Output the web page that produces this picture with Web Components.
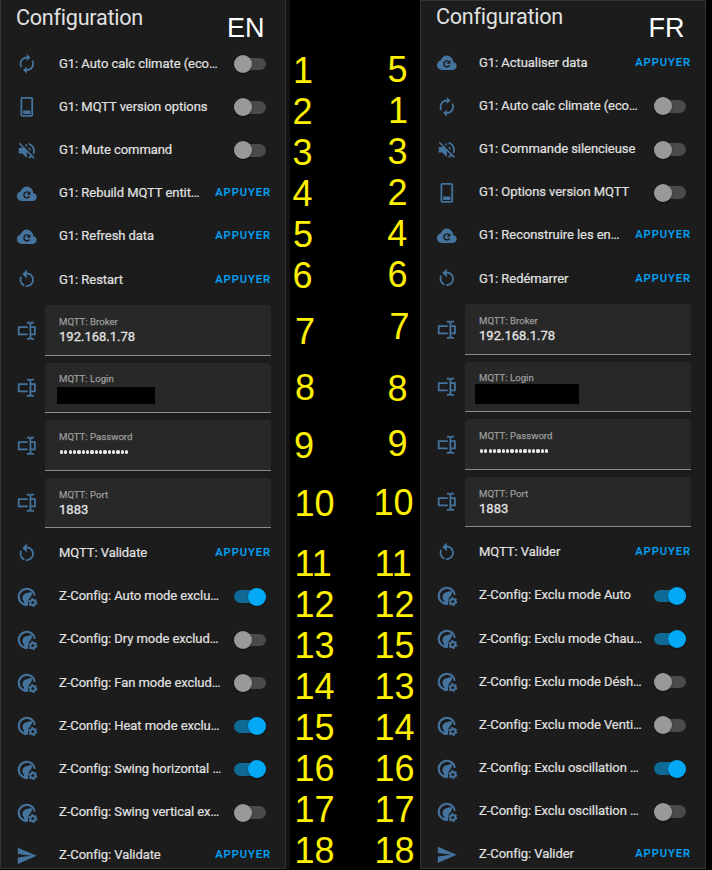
<!DOCTYPE html>
<html lang="en">
<head>
<meta charset="utf-8">
<title>Configuration</title>
<style>
html,body{margin:0;background:#000;}
body{width:712px;height:870px;overflow:hidden;font-family:Roboto,"Noto Sans",sans-serif;}
</style>
</head>
<body>
<compare-board></compare-board>
<script>
const ICONS = {
  renew:'<path d="M12,6V9L16,5L12,1V4A8,8 0 0,0 4,12C4,13.57 4.46,15.03 5.24,16.26L6.7,14.8C6.25,13.97 6,13 6,12A6,6 0 0,1 12,6M18.76,7.74L17.3,9.2C17.74,10.04 18,11 18,12A6,6 0 0,1 12,18V15L8,19L12,23V20A8,8 0 0,0 20,12C20,10.43 19.54,8.97 18.76,7.74Z"/>',
  phone:'<path fill-rule="evenodd" d="M7,1H17A2,2 0 0,1 19,3V21A2,2 0 0,1 17,23H7A2,2 0 0,1 5,21V3A2,2 0 0,1 7,1M7,3V21H17V3ZM8,16H16V20H8Z"/>',
  mute:'<path d="M12,4L9.91,6.09L12,8.18M4.27,3L3,4.27L7.73,9H3V15H7L12,20V13.27L16.25,17.53C15.58,18.04 14.83,18.46 14,18.7V20.77C15.38,20.45 16.63,19.82 17.68,18.96L19.73,21L21,19.73L12,10.73M19,12C19,12.94 18.8,13.82 18.46,14.64L19.97,16.15C20.62,14.91 21,13.5 21,12C21,7.72 18,4.14 14,3.23V5.29C16.89,6.15 19,8.83 19,12M16.5,12C16.5,10.23 15.5,8.71 14,7.97V10.18L16.45,12.63C16.5,12.43 16.5,12.21 16.5,12Z"/>',
  cloud:'<path d="M6.5 20Q4.22 20 2.61 18.43 1 16.85 1 14.58 1 12.63 2.17 11.1 3.35 9.57 5.25 9.15 5.88 6.85 7.75 5.43 9.63 4 12 4 14.93 4 16.96 6.04 19 8.07 19 11 20.73 11.2 21.86 12.5 23 13.78 23 15.5 23 17.38 21.69 18.69 20.38 20 18.5 20Z"/><path d="M15 14.8A3.3 3.3 0 1 1 14.4 10.8" fill="none" stroke="#1c1c1c" stroke-width="1.6"/><path fill="#1c1c1c" d="M16 8.8V13H11.8Z"/>',
  restart:'<path d="M12,4C14.1,4 16.1,4.8 17.6,6.3C20.7,9.4 20.7,14.5 17.6,17.6C15.8,19.5 13.3,20.2 10.9,19.9L11.4,17.9C13.1,18.1 14.9,17.5 16.2,16.2C18.5,13.9 18.5,10.1 16.2,7.7C15.1,6.6 13.5,6 12,6V10.6L7,5.6L12,0.6V4M6.3,17.6C3.7,15 3.3,11 5.1,7.9L6.6,9.4C5.5,11.6 5.9,14.4 7.8,16.2C8.3,16.7 8.9,17.1 9.6,17.4L9,19.4C8,19 7.1,18.4 6.3,17.6Z"/>',
  field:'<path d="M17,7H22V17H17V19A1,1 0 0,0 18,20H20V22H17.5C16.95,22 16,21.55 16,21C16,21.55 15.05,22 14.5,22H12V20H14A1,1 0 0,0 15,19V5A1,1 0 0,0 14,4H12V2H14.5C15.05,2 16,2.45 16,3C16,2.45 16.95,2 17.5,2H20V4H18A1,1 0 0,0 17,5V7M2,7H13V9H4V15H13V17H2V7M20,15V9H17V15H20Z"/>',
  gauge:'<path d="M20.8 11A8.9 8.9 0 1 0 12 20.9" fill="none" stroke="currentColor" stroke-width="2.4"/><path d="M12 8L17 6.3L18 8.8L16 12.6C14.4 14 13.6 15.6 13.4 18V22H9V17C7.4 15.8 6.9 13.8 7.4 11.9C8 9.6 9.8 8.2 12 8Z"/><circle cx="18.7" cy="18.4" r="2.8" fill="none" stroke="currentColor" stroke-width="2.2"/><circle cx="18.7" cy="18.4" r="4.3" fill="none" stroke="currentColor" stroke-width="1.5" stroke-dasharray="2.25 2.25"/>',
  send:'<path d="M2,21L23,12L2,3V10L17,12L2,14V21Z"/>'
};

class BoardIcon extends HTMLElement{
  connectedCallback(){
    this.attachShadow({mode:'open'}).innerHTML=`<style>:host{display:block;flex:none;width:21.6px;height:21.6px;color:#44739e}svg{display:block;width:100%;height:100%;fill:currentColor}</style><svg viewBox="0 0 24 24">${ICONS[this.getAttribute('name')]}</svg>`;
  }
}
customElements.define('board-icon',BoardIcon);

class ToggleSwitch extends HTMLElement{
  connectedCallback(){
    this.attachShadow({mode:'open'}).innerHTML=`<style>
:host{display:flex;align-items:center;flex:none;box-sizing:border-box;width:32.4px;height:12.6px;border-radius:7px;background:#4a4a4a;margin-right:4.6px}
i{display:block;width:18px;height:18px;flex:none;border-radius:50%;background:#999;box-shadow:0 1px 2px #0006}
:host([on]){background:#0f6a95;justify-content:flex-end}
:host([on]) i{background:#03a9f4;margin-right:.3px}
</style><i></i>`;
  }
}
customElements.define('toggle-switch',ToggleSwitch);

class EntityRow extends HTMLElement{
  connectedCallback(){
    this.attachShadow({mode:'open'}).innerHTML=`<style>
:host{display:flex;align-items:center;height:36px;padding-left:7.2px;white-space:nowrap}
.label{flex:1;margin-left:21.1px;padding-bottom:1px;font-size:13px;line-height:18px;color:#e1e1e1;letter-spacing:-.06px;-webkit-text-stroke:.2px #e1e1e1}
</style><board-icon name="${this.getAttribute('icon')}"></board-icon><span class="label"><slot></slot></span><slot name="control"></slot>`;
  }
}
customElements.define('entity-row',EntityRow);

class PressButton extends HTMLElement{
  connectedCallback(){
    this.attachShadow({mode:'open'}).innerHTML=`<style>:host{display:block;font-size:11.2px;font-weight:500;letter-spacing:.95px;color:#03a0f0;-webkit-text-stroke:.15px #03a0f0;line-height:18px;padding-bottom:1px;margin-right:-.1px}</style><slot></slot>`;
  }
}
customElements.define('press-button',PressButton);

class FieldRow extends HTMLElement{
  connectedCallback(){
    this.attachShadow({mode:'open'}).innerHTML=`<style>
:host{display:flex;align-items:center;height:50.4px;padding-left:7.2px}
.box{flex:1;margin-left:7.2px;box-sizing:border-box;height:50.4px;background:#282828;border-radius:4px 4px 0 0;border-bottom:1px solid #8c8c8c;padding:9.6px 13.9px 0}
.cap{font-size:9.6px;line-height:13px;color:#9b9b9b;-webkit-text-stroke:.25px #9b9b9b}
.val{font-size:13px;line-height:18px;color:#e1e1e1;-webkit-text-stroke:.3px #e1e1e1}
</style><board-icon name="field"></board-icon><div class="box"><div class="cap">${this.getAttribute('caption')}</div><div class="val"><slot></slot></div></div>`;
  }
}
customElements.define('field-row',FieldRow);

class MaskBar extends HTMLElement{
  connectedCallback(){
    this.attachShadow({mode:'open'}).innerHTML='<style>:host{display:block;background:#000;width:var(--w);height:var(--h);margin:var(--m)}</style>';
  }
}
customElements.define('mask-bar',MaskBar);

class PasswordDots extends HTMLElement{
  connectedCallback(){
    this.attachShadow({mode:'open'}).innerHTML=`<style>:host{display:flex;align-items:center;height:18px;gap:1.17px;padding-left:.9px}i{width:3.2px;height:3.2px;border-radius:50%;background:#e8e8e8}</style>${'<i></i>'.repeat(16)}`;
  }
}
customElements.define('password-dots',PasswordDots);

class ConfigCard extends HTMLElement{
  connectedCallback(){
    this.attachShadow({mode:'open'}).innerHTML=`<style>
:host{display:block;box-sizing:border-box;width:286px;height:868.5px;background:#1c1c1c;border:1px solid #333;overflow:hidden}
header{display:flex;justify-content:space-between;height:var(--head);padding:0 20.5px 0 15px;box-sizing:border-box}
h1{margin:0;font-weight:400;font-size:21.6px;letter-spacing:-.25px;line-height:28px;margin-top:var(--title-top);color:#e1e1e1}
b{font:400 27px/32px "Liberation Sans",Arial,sans-serif;color:#fff;margin-top:var(--tag-top)}
main{display:flex;flex-direction:column;gap:7.2px;padding:0 14px 0 8.2px}
</style><header><h1>Configuration</h1><b>${this.getAttribute('tag')}</b></header><main><slot></slot></main>`;
  }
}
customElements.define('config-card',ConfigCard);

class NumberColumn extends HTMLElement{
  connectedCallback(){
    const items=JSON.parse(this.getAttribute('items'));
    this.attachShadow({mode:'open'}).innerHTML=`<style>
:host{display:block;position:relative;height:870px;font:36px/41px "Liberation Sans",Arial,sans-serif;color:#ffef00}
span{position:absolute}
</style>${items.map(([t,x,y])=>`<span style="left:${x}px;top:${y-32.7}px">${t}</span>`).join('')}`;
  }
}
customElements.define('number-column',NumberColumn);

const EN=[['renew','G1: Auto calc climate (eco…',0],['phone','G1: MQTT version options',0],['mute','G1: Mute command',0],['cloud','G1: Rebuild MQTT entit…','p'],['cloud','G1: Refresh data','p'],['restart','G1: Restart','p'],'F',
['restart','MQTT: Validate','p'],['gauge','Z-Config: Auto mode exclu…',1],['gauge','Z-Config: Dry mode exclud…',0],['gauge','Z-Config: Fan mode exclud…',0],['gauge','Z-Config: Heat mode exclu…',1],['gauge','Z-Config: Swing horizontal …',1],['gauge','Z-Config: Swing vertical ex…',0],['send','Z-Config: Validate','p']];
const FR=[['cloud','G1: Actualiser data','p'],['renew','G1: Auto calc climate (eco…',0],['mute','G1: Commande silencieuse',0],['phone','G1: Options version MQTT',0],['cloud','G1: Reconstruire les en…','p'],['restart','G1: Redémarrer','p'],'F',
['restart','MQTT: Valider','p'],['gauge','Z-Config: Exclu mode Auto',1],['gauge','Z-Config: Exclu mode Chau…',1],['gauge','Z-Config: Exclu mode Désh…',0],['gauge','Z-Config: Exclu mode Venti…',0],['gauge','Z-Config: Exclu oscillation …',1],['gauge','Z-Config: Exclu oscillation …',0],['send','Z-Config: Valider','p']];
const fields=mask=>`<field-row caption="MQTT: Broker">192.168.1.78</field-row><field-row caption="MQTT: Login"><mask-bar style="${mask}"></mask-bar></field-row><field-row caption="MQTT: Password"><password-dots></password-dots></field-row><field-row caption="MQTT: Port">1883</field-row>`;
const rows=(list,mask)=>list.map(r=>r==='F'?fields(mask):`<entity-row icon="${r[0]}">${r[1]}${r[2]==='p'?'<press-button slot="control">APPUYER</press-button>':`<toggle-switch slot="control" ${r[2]?'on':''}></toggle-switch>`}</entity-row>`).join('');
const NUM_L=[[1,293,82.7],[2,292.5,123.7],[3,292.5,164.3],[4,292.5,205.7],[5,293,246.3],[6,292.5,287.5],[7,295,343.7],[8,295,399.5],[9,294,457.3],[10,294.4,515.7],...[11,12,13,14,15,16,17,18].map((n,i)=>[n,294.4,575.7+41*i])];
const NUM_R=[[5,387.6,81.7],[1,388,122.7],[3,387.6,163.3],[2,387.6,204.7],[4,387.2,245.7],[6,387.6,286.5],[7,389.6,338.7],[8,387.6,400.5],[9,387.6,455.7],[10,373.6,514.7],...[11,12,15,13,14,16,17,18].map((n,i)=>[n,374.4,575.7+41*i])];

class CompareBoard extends HTMLElement{
  connectedCallback(){
    this.attachShadow({mode:'open'}).innerHTML=`<style>
:host{display:grid;grid-template-columns:290px 130px 292px;width:712px;height:870px;background:#000;overflow:hidden}
.left{background:linear-gradient(#111,#111) 286px 0/4px 869px no-repeat}
.left config-card{margin-top:-1px;height:869.5px}
.mid{margin-left:-290px}
</style>
<div class="left"><config-card tag="EN" style="--head:46.1px;--title-top:3.6px;--tag-top:11.5px">${rows(EN,'--w:98px;--h:17px;--m:2px 0 0 -1.9px')}</config-card></div>
<div class="mid"><number-column items='${JSON.stringify([...NUM_L,...NUM_R])}'></number-column></div>
<div><config-card tag="FR" style="--head:44.2px;--title-top:1.6px;--tag-top:10.5px">${rows(FR,'--w:104px;--h:20px;--m:-.6px 0 0 -3.9px')}</config-card></div>`;
  }
}
customElements.define('compare-board',CompareBoard);
</script>
</body>
</html>
